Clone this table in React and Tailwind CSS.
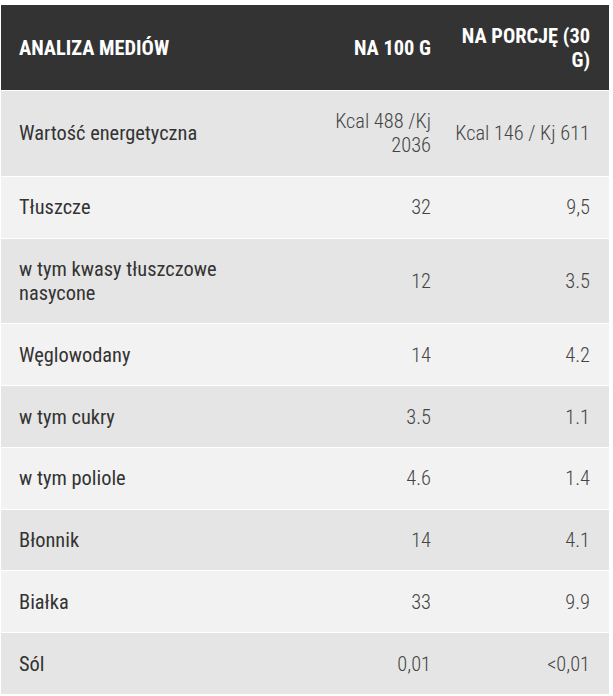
import React from 'react';

const rows = [
  { label: 'Wartość energetyczna', per100: 'Kcal 488 /Kj 2036', perPortion: 'Kcal 146 / Kj 611' },
  { label: 'Tłuszcze', per100: '32', perPortion: '9,5' },
  { label: 'w tym kwasy tłuszczowe nasycone', per100: '12', perPortion: '3.5' },
  { label: 'Węglowodany', per100: '14', perPortion: '4.2' },
  { label: 'w tym cukry', per100: '3.5', perPortion: '1.1' },
  { label: 'w tym poliole', per100: '4.6', perPortion: '1.4' },
  { label: 'Błonnik', per100: '14', perPortion: '4.1' },
  { label: 'Białka', per100: '33', perPortion: '9.9' },
  { label: 'Sól', per100: '0,01', perPortion: '<0,01' },
];

const App = () => {
  return (
    <div className="bg-white pt-[5px] pl-[1px] font-['Roboto_Condensed','Roboto',sans-serif] font-stretch-condensed">
      <table className="w-[608px] table-fixed border-collapse text-[20.4px] leading-[24px]">
        <colgroup>
          <col className="w-[280px]" />
          <col className="w-[160px]" />
          <col className="w-[168px]" />
        </colgroup>
        <thead>
          <tr className="bg-[#333333] text-white text-[20.4px] font-bold uppercase">
            <th className="py-[18.5px] pl-[18px] pr-[10px] text-left">Analiza mediów</th>
            <th className="py-[18.5px] pl-[30px] pr-[10px] text-right">Na 100 g</th>
            <th className="py-[18.5px] pl-[10px] pr-[19px] text-right">Na porcję (30 g)</th>
          </tr>
        </thead>
        <tbody>
          {rows.map((row, i) => (
            <tr
              key={row.label}
              className={`border-t border-white ${i % 2 === 0 ? 'bg-[#e5e5e5]' : 'bg-[#f2f2f2]'}`}
            >
              <td className="py-[18.4px] pl-[18px] pr-[10px] text-[#333333]">{row.label}</td>
              <td className="py-[18.4px] pl-[30px] pr-[10px] text-right font-light text-[#444444]">{row.per100}</td>
              <td className="py-[18.4px] pl-[10px] pr-[19px] text-right font-light text-[#444444]">{row.perPortion}</td>
            </tr>
          ))}
        </tbody>
      </table>
    </div>
  );
};

export default App;
